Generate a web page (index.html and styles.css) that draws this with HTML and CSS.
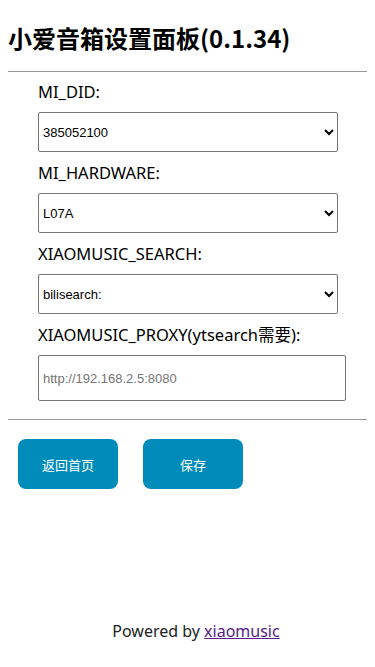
FILE: index.html
```html
<!DOCTYPE html>
<html lang="zh-CN">
<head>
    <meta charset="UTF-8">
    <meta name="viewport" content="width=device-width, initial-scale=1.0">
    <title>小爱音箱设置面板</title>
    <link rel="stylesheet" href="styles.css">
</head>
<body>
    <h1>小爱音箱设置面板(0.1.34)</h1>
    <hr>

    <div class="settings">
        <label for="mi_did">MI_DID:</label>
        <select id="mi_did">
            <option>385052100</option>
        </select>

        <label for="mi_hardware">MI_HARDWARE:</label>
        <select id="mi_hardware">
            <option>L07A</option>
        </select>

        <label for="xiaomusic_search">XIAOMUSIC_SEARCH:</label>
        <select id="xiaomusic_search">
            <option>bilisearch:</option>
        </select>

        <label for="xiaomusic_proxy">XIAOMUSIC_PROXY(ytsearch需要):</label>
        <input type="text" id="xiaomusic_proxy" placeholder="http://192.168.2.5:8080">
    </div>

    <hr class="bottom">

    <div class="buttons">
        <button onclick="location.href='/'">返回首页</button>
        <button id="save">保存</button>
    </div>

    <footer>
        Powered by <a href="https://github.com/hanxi/xiaomusic">xiaomusic</a>
    </footer>
</body>
</html>
```

FILE: styles.css
```css
html, body { height: 100%; }
body { margin: 0; padding: 0 8px; font-family: "Noto Sans", "Noto Sans CJK SC", sans-serif; color: #000; background: #fff; display: flex; flex-direction: column; box-sizing: border-box; }
h1 { font-family: "Noto Sans CJK SC", sans-serif; font-size: 24px; font-weight: 700; margin: 22px 0 0; line-height: 32px; }
hr { width: 100%; margin: 17px 0 0; border: none; border-top: 1px solid #999; height: 0; }
hr.bottom { margin-top: 0; }
.settings { display: flex; flex-direction: column; align-items: flex-start; padding: 9px 0 0 30px; }
label { font-size: 16.5px; line-height: 22px; margin-bottom: 9px; }
select { width: 300px; height: 40px; padding: 0; margin-bottom: 10px; font-family: "Liberation Sans", Arial, sans-serif; font-size: 13px; color: #000; background: #fff; border: 1px solid #767676; border-radius: 2px; }
input { width: 308px; height: 46px; padding: 0 4px; margin-bottom: 18px; font-family: "Liberation Sans", Arial, sans-serif; font-size: 13px; border: 1px solid #767676; border-radius: 2px; box-sizing: border-box; }
input::placeholder { color: #757575; }
.buttons { display: flex; gap: 25px; padding: 19px 0 0 10px; }
button { width: 100px; height: 50px; background-color: #008cba; color: #fff; border: none; border-radius: 8px; font-family: "Noto Sans CJK SC", sans-serif; font-size: 13px; cursor: pointer; }
footer { margin-top: auto; padding: 0 0 26px 17px; text-align: center; font-size: 16px; line-height: 20px; color: #222; }
footer a { color: #551a8b; }
```
